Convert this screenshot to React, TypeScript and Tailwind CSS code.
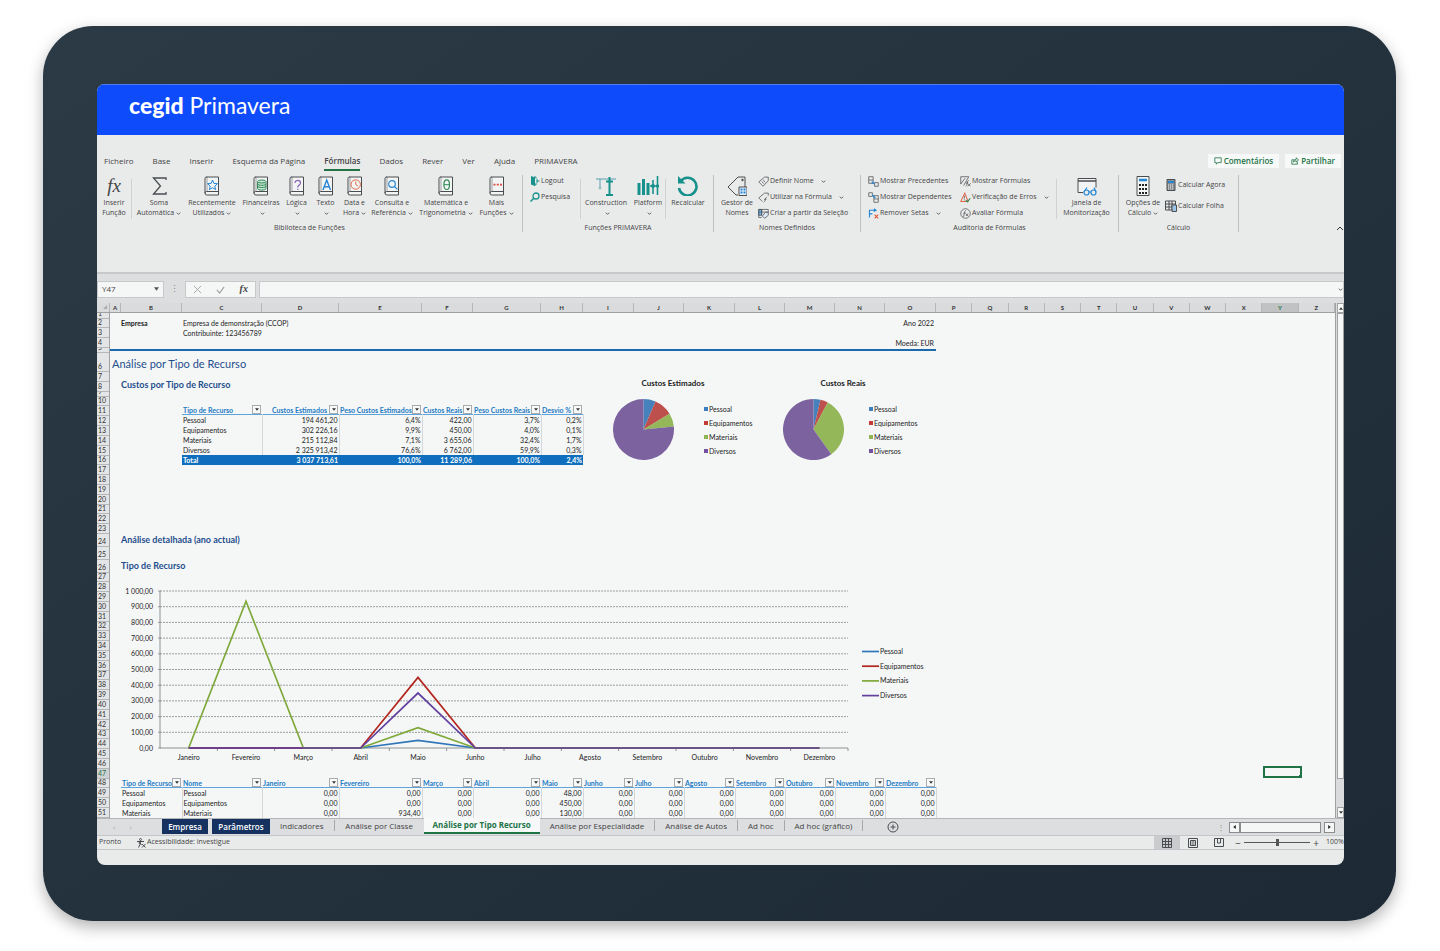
import React from "react";

type IconProps = { children: React.ReactNode; className?: string; box?: string };

const Svg = ({ children, className = "w-5 h-5", box = "0 0 20 20" }: IconProps) => (
  <svg viewBox={box} className={`shrink-0 ${className}`} fill="none" stroke="#4a4d50" strokeWidth="1" aria-hidden="true">
    {children}
  </svg>
);

const Chevron = () => (
  <svg viewBox="0 0 6 6" className="inline-block w-[5px] h-[5px] ml-0.5 shrink-0" fill="none" stroke="#444" aria-hidden="true">
    <path d="M1 2l2 2 2-2" />
  </svg>
);

const Book = ({ children }: { children?: React.ReactNode }) => (
  <Svg>
    <path d="M4 1h12.500v18H5.200A2 2 0 0 1 3 17V2.500A1.500 1.500 0 0 1 4.500 1" fill="#f3f4f4" />
    <path d="M3 17.200a1.500 1.500 0 0 1 1.500-1.700h12" />
    <path d="M5 1v14.500" strokeWidth=".5" />
    {children}
  </Svg>
);

const functionButtons = [
  {
    lines: ["Soma", "Automática"],
    width: "w-[54px]",
    icon: (
      <Svg>
        <path d="M17 4V2H4.500l7 8-7 8H17v-2" strokeWidth="1.300" />
      </Svg>
    ),
  },
  {
    lines: ["Recentemente", "Utilizados"],
    width: "w-[52px]",
    icon: (
      <Book>
        <path d="M10.500 4l1.400 3.400 3.600.3-2.700 2.400.8 3.600-3.100-2-3.100 2 .8-3.600L5.500 7.700l3.600-.3z" stroke="#2487d6" />
      </Book>
    ),
  },
  {
    lines: ["Financeiras", ""],
    width: "w-[46px]",
    icon: (
      <Book>
        <g stroke="#2f8a56" fill="#c7e3d1">
          <path d="M6.500 5.500v7c0 2.200 8.500 2.200 8.500 0v-7" />
          <path d="M6.500 10c0 2 8.500 2 8.500 0M6.500 7.800c0 2 8.500 2 8.500 0" fill="none" />
          <ellipse cx="10.750" cy="5.500" rx="4.250" ry="1.500" />
        </g>
      </Book>
    ),
  },
  {
    lines: ["Lógica", ""],
    width: "w-[25px]",
    icon: (
      <Book>
        <path d="M8 7c0-3.500 5.500-3.500 5.500 0 0 2.200-2.700 2-2.700 4.500M10.800 12.700v1.300" stroke="#8b62b8" strokeWidth="1.200" />
      </Book>
    ),
  },
  {
    lines: ["Texto", ""],
    width: "w-[33px]",
    icon: (
      <Book>
        <path d="M7 14l3.700-10 3.800 10M8.200 10.800h5" stroke="#2487d6" strokeWidth="1.400" />
      </Book>
    ),
  },
  {
    lines: ["Data e", "Hora"],
    width: "w-[25px]",
    icon: (
      <Book>
        <circle cx="10.700" cy="8.500" r="4.700" stroke="#e2694a" />
        <path d="M10.700 5.500v3l2.300 1.500" stroke="#e2694a" />
      </Book>
    ),
  },
  {
    lines: ["Consulta e", "Referência"],
    width: "w-[50px]",
    icon: (
      <Book>
        <circle cx="10" cy="8" r="3.300" stroke="#2487d6" strokeWidth="1.200" />
        <path d="M12.400 10.400l3 3" stroke="#2487d6" strokeWidth="1.300" />
      </Book>
    ),
  },
  {
    lines: ["Matemática e", "Trigonometria"],
    width: "w-[58px]",
    icon: (
      <Book>
        <ellipse cx="10.700" cy="8.700" rx="2.800" ry="4.800" stroke="#2f8a56" strokeWidth="1.200" />
        <path d="M8 8.700h5.500" stroke="#2f8a56" />
      </Book>
    ),
  },
  {
    lines: ["Mais", "Funções"],
    width: "w-[43px]",
    icon: (
      <Book>
        <path d="M6.500 8.700h2M9.800 8.700h2M13 8.700h2" stroke="#dd4b39" strokeWidth="1.800" />
      </Book>
    ),
  },
];

type BigProps = { lines: string[]; icon: React.ReactNode; width: string; chevron?: boolean };

const BigButton = ({ lines, icon, width, chevron = true }: BigProps) => (
  <button className={`flex flex-col items-center self-start pt-px text-[7px] leading-[10px] whitespace-nowrap ${width}`}>
    {icon}
    <span className="mt-0.5">{lines[0]}</span>
    <span className="flex h-[10px] items-center">
      {lines[1]}
      {chevron && <Chevron />}
    </span>
  </button>
);

const SmallButton = ({ label, icon, chevron }: { label: string; icon: React.ReactNode; chevron?: boolean }) => (
  <button className="flex items-center gap-px h-4 shrink-0 text-[7px] leading-[10px] whitespace-nowrap">
    {icon}
    {label}
    {chevron && (
      <span className="ml-1 flex">
        <Chevron />
      </span>
    )}
  </button>
);

const Group = ({ title, width, children }: { title: string; width: string; children: React.ReactNode }) => (
  <section className={`flex flex-col justify-between border-r border-[#bfc1c3] h-[57px] shrink-0 ${width}`}>
    <div className="flex h-[44px]">{children}</div>
    <h3 className="text-[7px] leading-[8px] text-center">{title}</h3>
  </section>
);

const Divider = () => <div className="w-px h-10 mt-1 bg-[#cfd1d2] shrink-0"></div>;

const tag = <path d="M9 1.500h5v5l-7 7.500-6-6z" />;

const Ribbon = () => (
  <div className="flex pt-1 pb-10">
    <Group title="Biblioteca de Funções" width="w-[426px]">
      <BigButton
        lines={["Inserir", "Função"]}
        width="w-[34px]"
        chevron={false}
        icon={<span className="h-5 font-['Liberation_Serif',serif] italic text-[19px] leading-5">fx</span>}
      />
      <Divider />
      {functionButtons.map((b) => (
        <BigButton key={b.lines[0]} {...b} />
      ))}
    </Group>

    <Group title="Funções PRIMAVERA" width="w-[191px]">
      <div className="flex flex-col w-[57px] pl-[7px] -mt-0.5">
        <SmallButton
          label="Logout"
          icon={
            <Svg className="w-[10px] h-[10px]" box="0 0 10 10">
              <path d="M1 0l4 1.500V10L1 8.500z" fill="#17918c" stroke="none" />
              <path d="M4 1h2v1.500M6 7v2H4M7 3v4M9.500 5H7" stroke="#17918c" />
            </Svg>
          }
        />
        <SmallButton
          label="Pesquisa"
          icon={
            <Svg className="w-[10px] h-[10px]" box="0 0 10 10">
              <circle cx="6" cy="4" r="3" stroke="#17918c" strokeWidth="1.300" />
              <path d="M3.800 6.200L.5 9.500" stroke="#17918c" strokeWidth="1.500" />
            </Svg>
          }
        />
      </div>
      <Divider />
      <BigButton
        lines={["Construction", ""]}
        width="w-[50px]"
        icon={
          <Svg>
            <path d="M0 3h20M4 3v8" stroke="#5b9fb0" />
            <path d="M13.500 1v17M10 19h7M10 5.500h7" stroke="#17918c" strokeWidth="2" />
            <circle cx="4" cy="12" r="1" stroke="#5b9fb0" strokeWidth=".7" />
          </Svg>
        }
      />
      <BigButton
        lines={["Platform", ""]}
        width="w-[34px]"
        icon={
          <Svg className="w-6 h-5" box="0 0 24 20">
            <path d="M3 7v12M7.500 3v16M12 7v12" stroke="#17918c" strokeWidth="3" />
            <path d="M17 4v14M21.500 0v19M14 10h8" stroke="#17918c" strokeWidth="1.600" />
            <circle cx="17" cy="10" r="2" fill="#17918c" stroke="none" />
            <circle cx="21.500" cy="10" r="1.700" fill="#17918c" stroke="none" />
          </Svg>
        }
      />
      <Divider />
      <BigButton
        lines={["Recalcular", ""]}
        width="w-[44px]"
        chevron={false}
        icon={
          <Svg className="w-6 h-5" box="0 0 24 20">
            <path d="M4.500 5.500A8.800 8.800 0 1 1 3 12" stroke="#17918c" strokeWidth="2.600" />
            <path d="M2 0v7.500h7.500z" fill="#17918c" stroke="none" />
          </Svg>
        }
      />
    </Group>

    <Group title="Nomes Definidos" width="w-[147px]">
      <BigButton
        lines={["Gestor de", "Nomes"]}
        width="w-[44px] pl-0.5"
        chevron={false}
        icon={
          <Svg>
            <path d="M11 1h7v10M11 1L1 11l8 8h2" />
            <circle cx="15.500" cy="4" r=".8" fill="#4a4d50" />
            <path d="M12 11h8v8.500h-8z" fill="#e8f2fb" stroke="#4a4d50" />
            <path d="M13.500 13.500h2M16.500 13.500h2M13.500 16.500h2M16.500 16.500h2" stroke="#2487d6" strokeWidth="1.800" />
          </Svg>
        }
      />
      <div className="flex flex-col -mt-0.5">
        <SmallButton
          label="Definir Nome"
          chevron
          icon={
            <Svg className="w-[11px] h-[11px]" box="0 0 15 15">
              {tag}
              <path d="M5 7.500l3 3M7 5.500l3 3" />
            </Svg>
          }
        />
        <SmallButton
          label="Utilizar na Fórmula"
          chevron
          icon={
            <Svg className="w-[11px] h-[11px]" box="0 0 15 15">
              <path d="M14 5V1.500H9L1 8l5 5M8 14c2 0 1.500-7 4-7M8.500 10h3" />
            </Svg>
          }
        />
        <SmallButton
          label="Criar a partir da Seleção"
          icon={
            <Svg className="w-[11px] h-[11px]" box="0 0 15 15">
              <path d="M1 2h13v4M1 2v11h4M1 5.500h13M5 2v8" />
              <path d="M1 2h4v8H1z" fill="#2487d6" fillOpacity=".6" />
              <path d="M10 6h4v4l-5 4-3-3z" fill="#dceafa" />
            </Svg>
          }
        />
      </div>
    </Group>

    <Group title="Auditoria de Fórmulas" width="w-[258px]">
      <div className="flex flex-col w-[93px] pl-[7px] -mt-0.5">
        <SmallButton
          label="Mostrar Precedentes"
          icon={
            <Svg className="w-[11px] h-[11px]" box="0 0 15 15">
              <path d="M1 1h6v9H1zM1 5.500h6M9 9h5v5H9z" />
              <path d="M5 8l4 3" stroke="#2487d6" strokeWidth="1.800" />
            </Svg>
          }
        />
        <SmallButton
          label="Mostrar Dependentes"
          icon={
            <Svg className="w-[11px] h-[11px]" box="0 0 15 15">
              <path d="M1 1h5v5H1zM8 5h6v9H8zM8 9.500h6" />
              <path d="M6 4l4 4" stroke="#2487d6" strokeWidth="1.800" />
            </Svg>
          }
        />
        <SmallButton
          label="Remover Setas"
          chevron
          icon={
            <Svg className="w-[11px] h-[11px]" box="0 0 15 15">
              <path d="M2 13V3h8M8 1l3 2-3 2M2 8h4" stroke="#2487d6" strokeWidth="1.500" />
              <path d="M9 9l5 5M14 9l-5 5" stroke="#e2553a" strokeWidth="1.500" />
            </Svg>
          }
        />
      </div>
      <div className="flex flex-col w-[102px] pl-1.5 -mt-0.5">
        <SmallButton
          label="Mostrar Fórmulas"
          icon={
            <Svg className="w-[11px] h-[11px]" box="0 0 15 15">
              <path d="M5 13L12 1H1v10l6-8M8 14c2.500 0 1-8 4-8M8 9.500h3M10.500 10l4 4M14.500 10l-4 4" />
            </Svg>
          }
        />
        <SmallButton
          label="Verificação de Erros"
          chevron
          icon={
            <Svg className="w-[11px] h-[11px]" box="0 0 15 15">
              <path d="M6.500 1.500L1 13h10z" stroke="#e2694a" strokeWidth="1.400" />
              <path d="M6 5v4M6 10v1.500" />
              <path d="M8 11l2 2.500 4-5" stroke="#2f8a56" strokeWidth="1.500" />
            </Svg>
          }
        />
        <SmallButton
          label="Avaliar Fórmula"
          icon={
            <Svg className="w-[11px] h-[11px]" box="0 0 15 15">
              <circle cx="7.500" cy="7.500" r="6.500" />
              <path d="M4 12c2 0 1.500-8.500 4-8.500M4.500 7h3M8 7.500l3 3.500M11 7.500L8 11" />
            </Svg>
          }
        />
      </div>
      <Divider />
      <BigButton
        lines={["Janela de", "Monitorização"]}
        width="w-[59px]"
        chevron={false}
        icon={
          <Svg>
            <path d="M6 16.500H1v-14h18v9" fill="#f3f4f4" />
            <path d="M1 5h18" strokeWidth="1.500" />
            <g stroke="#2487d6" strokeWidth="1.200">
              <circle cx="9.500" cy="16.500" r="2.500" />
              <circle cx="16.500" cy="16.500" r="2.500" />
              <path d="M12 16h2M7 16l3-4.500M19 16l-2-4.500" />
            </g>
          </Svg>
        }
      />
    </Group>

    <Group title="Cálculo" width="w-[120px]">
      <BigButton
        lines={["Opções de", "Cálculo"]}
        width="w-[46px] pl-0.5"
        icon={
          <Svg>
            <path d="M4 .5h12v19H4z" fill="#f3f4f4" />
            <path d="M6 4h8" stroke="#2487d6" strokeWidth="2.500" />
            <path d="M6 9h8M6 13h8M6 17h8" stroke="#222" strokeWidth="1.800" strokeDasharray="2 1" />
          </Svg>
        }
      />
      <div className="flex flex-col gap-[5px] pt-0.5">
        <SmallButton
          label="Calcular Agora"
          icon={
            <Svg className="w-3 h-3" box="0 0 12 12">
              <path d="M2 .5h8v11H2z" fill="#8d9093" />
              <path d="M3 3h6" stroke="#2487d6" strokeWidth="2" />
              <path d="M3 6h6M3 8h6M3 10h6" stroke="#e9ebeb" strokeDasharray="1 1" />
            </Svg>
          }
        />
        <SmallButton
          label="Calcular Folha"
          icon={
            <Svg className="w-3 h-3" box="0 0 12 12">
              <path d="M.5 1h10v9H.5zM4 1v9M7 1v9M.5 4h10M.5 7h10" />
              <path d="M7 5h4.500v6.500H7z" fill="#9cc3ea" />
            </Svg>
          }
        />
      </div>
    </Group>

    <button aria-label="Fechar friso" className="ml-auto self-end">
      <svg viewBox="0 0 8 8" className="w-2 h-2" fill="none" stroke="#333" aria-hidden="true">
        <path d="M1 6l3-3 3 3" />
      </svg>
    </button>
  </div>
);

const menuItems = ["Ficheiro", "Base", "Inserir", "Esquema da Página", "Fórmulas", "Dados", "Rever", "Ver", "Ajuda", "PRIMAVERA"];

const MenuBar = () => (
  <nav className="flex items-center pt-[18px] pl-[7px] pr-[3px] text-[8px] leading-[14px]">
    <div className="flex gap-[19px]">
      {menuItems.map((item) => (
        <a
          key={item}
          href="#"
          className={`border-b-2 py-px whitespace-nowrap ${item === "Fórmulas" ? "border-[#217346] font-semibold" : "border-transparent"}`}
        >
          {item}
        </a>
      ))}
    </div>
    <div className="ml-auto flex gap-1.5 pb-0.5 font-semibold text-[#217346]">
      <button className="flex items-center gap-0.5 bg-[#f7f8f8] px-1.5">
        <Svg className="w-2 h-2" box="0 0 10 10">
          <path d="M1 1h8v6H4.500L3 9V7H1z" stroke="#217346" />
        </Svg>
        Comentários
      </button>
      <button className="flex items-center gap-0.5 bg-[#f7f8f8] px-1.5">
        <Svg className="w-2 h-2" box="0 0 10 10">
          <path d="M4 3.500H1V9h7V6M3 6.500C3 4 4.500 3 6.500 3V1l3 2.700-3 2.700v-1.700C5 4.700 4 5 3 6.500z" stroke="#217346" />
        </Svg>
        Partilhar
      </button>
    </div>
  </nav>
);

const FormulaBar = () => (
  <div className="flex items-center h-[31px] pt-px border-t-2 border-[#c6c8ca] bg-[#dcdee0]">
    <div className="flex items-center w-[67px] h-[17px] bg-[#f5f7f7] border border-[#c6c8ca] pr-1">
      <input aria-label="Caixa de nome" defaultValue="Y47" className="w-full min-w-0 pl-1 text-[8px] outline-none" />
      <svg viewBox="0 0 6 4" className="w-[5px] h-1 shrink-0" fill="#555" aria-hidden="true">
        <path d="M0 0h6L3 4z" />
      </svg>
    </div>
    <span className="w-[21px] text-center text-[9px] text-[#888]">⋮</span>
    <div className="flex items-center justify-around w-[71px] h-[17px] bg-[#f5f7f7] border border-[#c6c8ca]">
      <button aria-label="Cancelar">
        <Svg className="w-[9px] h-[9px]" box="0 0 10 10">
          <path d="M1 1l8 8M9 1L1 9" stroke="#a0a2a4" />
        </Svg>
      </button>
      <button aria-label="Introduzir">
        <Svg className="w-[9px] h-[9px]" box="0 0 10 10">
          <path d="M1 5.500L4 9l5-7" stroke="#a0a2a4" strokeWidth="1.300" />
        </Svg>
      </button>
      <button className="font-['Liberation_Serif',serif] italic font-bold text-[10px] leading-3">fx</button>
    </div>
    <div className="flex flex-1 items-center h-[17px] ml-[3px] bg-[#f5f7f7] border border-[#c6c8ca]">
      <input aria-label="Barra de fórmulas" className="flex-1 min-w-0 text-[8px] outline-none" />
      <Chevron />
    </div>
  </div>
);

const fixedColumns = [
  { name: "A", width: "w-[11px]" },
  { name: "B", width: "w-[61px]" },
  { name: "C", width: "w-[80px]" },
  { name: "D", width: "w-[77px]" },
  { name: "E", width: "w-[83px]" },
  { name: "F", width: "w-[51px]" },
  { name: "G", width: "w-[68px]" },
  { name: "H", width: "w-[42px]" },
  { name: "I", width: "w-[51px]" },
  { name: "J", width: "w-[50px]" },
  { name: "K", width: "w-[51px]" },
  { name: "L", width: "w-[50px]" },
  { name: "M", width: "w-[50px]" },
  { name: "N", width: "w-[50px]" },
  { name: "O", width: "w-[51px]" },
];

const ColumnHeader = () => (
  <div className="flex h-[10px] border-b border-[#9fa1a3] bg-[#d9dbdd] text-[6px] leading-[10px] font-bold text-center text-[#333]">
    <div className="flex justify-end w-[13px] border-r border-[#b4b6b8] p-0.5">
      <svg viewBox="0 0 4 4" className="w-1 h-1" fill="#aaa" aria-hidden="true">
        <path d="M4 0v4H0z" />
      </svg>
    </div>
    {fixedColumns.map((c) => (
      <div key={c.name} className={`border-r border-[#b4b6b8] ${c.width}`}>
        {c.name}
      </div>
    ))}
    {["P", "Q", "R", "S", "T", "U", "V", "W", "X", "Y", "Z"].map((c) => (
      <div key={c} className={`flex-1 border-r border-[#b4b6b8] ${c === "Y" ? "bg-[#c0c2c4] text-[#217346]" : ""}`}>
        {c}
      </div>
    ))}
  </div>
);

// relative heights of the rows that are not the default size
const rowHeights: Record<number, number> = { 1: 5, 5: 5, 6: 20, 9: 4, 24: 13.5, 25: 13, 26: 13 };

const RowHeader = () => (
  <div className="flex flex-col w-[13px] shrink-0 bg-[#e3e5e6] border-r border-[#9fa1a3] text-[7px] leading-[9px] text-[#333]">
    {Array.from({ length: 51 }, (_, i) => i + 1).map((n) => (
      <div
        key={n}
        className={`flex items-end basis-0 min-h-0 overflow-hidden pl-px border-b border-[#b4b6b8] ${n === 47 ? "bg-[#cfd1d3] text-[#217346]" : ""}`}
        style={{ flexGrow: rowHeights[n] ?? 9.8 }}
      >
        {n}
      </div>
    ))}
  </div>
);

const FilterButton = ({ name }: { name: string }) => (
  <button aria-label={`Filtrar ${name}`} className="flex items-center justify-center w-[9px] h-[9px] shrink-0 border border-[#a9abad] bg-[#f8f9f9]">
    <svg viewBox="0 0 6 4" className="w-1 h-[3px]" fill="#333" aria-hidden="true">
      <path d="M0 0h6L3 4z" />
    </svg>
  </button>
);

const HeadCell = ({ name, end }: { name: string; end?: boolean }) => (
  <th className="p-0 font-bold text-[#1c7ac4]">
    <div className={`flex items-center h-[9px] pl-px pr-px ${end ? "justify-end gap-0.5" : "justify-between"}`}>
      <span className="whitespace-nowrap">{name}</span>
      <FilterButton name={name} />
    </div>
  </th>
);

const costRows = [
  ["Pessoal", "194 461,20", "6,4%", "422,00", "3,7%", "0,2%"],
  ["Equipamentos", "302 226,16", "9,9%", "450,00", "4,0%", "0,1%"],
  ["Materiais", "215 112,84", "7,1%", "3 655,06", "32,4%", "1,7%"],
  ["Diversos", "2 325 913,42", "76,6%", "6 762,00", "59,9%", "0,3%"],
];
const totalRow = ["Total", "3 037 713,61", "100,0%", "11 289,06", "100,0%", "2,4%"];

const CostTable = () => (
  <table className="table-fixed w-[401px] ml-[72px] mt-3 text-[7px] leading-[10px]">
    <colgroup>
      <col className="w-[80px]" />
      <col className="w-[77px]" />
      <col className="w-[83px]" />
      <col className="w-[51px]" />
      <col className="w-[68px]" />
      <col className="w-[42px]" />
    </colgroup>
    <thead>
      <tr className="border-b border-[#5fa3dc]">
        {["Tipo de Recurso", "Custos Estimados", "Peso Custos Estimados", "Custos Reais", "Peso Custos Reais", "Desvio %"].map((h) => (
          <HeadCell key={h} name={h} end={h === "Custos Estimados"} />
        ))}
      </tr>
    </thead>
    <tbody>
      {costRows.map((row) => (
        <tr key={row[0]}>
          {row.map((cell, i) => (
            <td key={i} className={`px-px py-0 border-r border-[#d5d8da] ${i > 0 ? "text-right" : ""}`}>
              {cell}
            </td>
          ))}
        </tr>
      ))}
      <tr className="bg-[#0f6fbe] text-white font-bold">
        {totalRow.map((cell, i) => (
          <td key={i} className={`px-px py-0 ${i > 0 ? "text-right" : ""}`}>
            {cell}
          </td>
        ))}
      </tr>
    </tbody>
  </table>
);

const series = [
  { name: "Pessoal", dot: "bg-[#3b7fc0]", fill: "#4681bb", line: "#2f75b8", values: [0, 0, 0, 0, 48, 0, 0, 0, 0, 0, 0, 0] },
  { name: "Equipamentos", dot: "bg-[#c23b36]", fill: "#bd4f4c", line: "#b3261f", values: [0, 0, 0, 0, 450, 0, 0, 0, 0, 0, 0, 0] },
  { name: "Materiais", dot: "bg-[#8fb552]", fill: "#94b759", line: "#7fa93a", values: [0, 934.4, 0, 0, 130, 0, 0, 0, 0, 0, 0, 0] },
  { name: "Diversos", dot: "bg-[#7350a0]", fill: "#7c639f", line: "#6340a0", values: [0, 0, 0, 0, 350, 0, 0, 0, 0, 0, 0, 0] },
];

const slicePath = (from: number, to: number) => {
  const x = (t: number) => 50 + 50 * Math.sin(2 * Math.PI * t);
  const y = (t: number) => 50 - 50 * Math.cos(2 * Math.PI * t);
  return `M50 50L${x(from)} ${y(from)}A50 50 0 ${to - from > 0.5 ? 1 : 0} 1 ${x(to)} ${y(to)}z`;
};

const Pie = ({ title, shares, gap }: { title: string; shares: number[]; gap: string }) => {
  const total = shares.reduce((a, b) => a + b, 0);
  let at = 0;
  return (
    <figure className="w-[170px] shrink-0">
      <figcaption className="w-[120px] text-center text-[8px] leading-3 font-bold text-[#222]">{title}</figcaption>
      <div className={`flex items-center mt-[10px] ${gap}`}>
        <svg viewBox="0 0 100 100" className="w-[61px] h-[61px]" aria-hidden="true">
          {shares.map((s, i) => {
            const from = at / total;
            at += s;
            return <path key={i} d={slicePath(from, at / total)} fill={series[i].fill} />;
          })}
        </svg>
        <ul className="text-[7px] leading-[14px]">
          {series.map((s) => (
            <li key={s.name} className="flex items-center gap-px">
              <span className={`w-1 h-1 ${s.dot}`}></span>
              {s.name}
            </li>
          ))}
        </ul>
      </div>
    </figure>
  );
};

const months = ["Janeiro", "Fevereiro", "Março", "Abril", "Maio", "Junho", "Julho", "Agosto", "Setembro", "Outubro", "Novembro", "Dezembro"];

const LineChart = () => {
  const px = (i: number) => 50 + (i + 0.5) * (688 / 12);
  const py = (v: number) => 174 - v * 0.157;
  return (
    <svg viewBox="0 0 826 192" className="w-[826px] h-[192px]" fontSize="7" fill="#222" aria-hidden="true">
      {Array.from({ length: 11 }, (_, i) => i * 100).map((v) => (
        <g key={v}>
          {v > 0 && <path d={`M50 ${py(v)}H738`} stroke="#9a9d9f" strokeDasharray="2 1" />}
          <path d={`M48 ${py(v)}h3`} stroke="#9a9d9f" />
          <text x="43" y={py(v) + 2.5} textAnchor="end">
            {v === 1000 ? "1 000,00" : `${v},00`}
          </text>
        </g>
      ))}
      <path d="M50 17v157H738" fill="none" stroke="#8e9193" />
      {months.map((m, i) => (
        <g key={m}>
          <path d={`M${px(i + 0.5)} 174v3`} stroke="#8e9193" />
          <text x={px(i)} y="186" textAnchor="middle">
            {m}
          </text>
        </g>
      ))}
      {series.map((s, n) => (
        <g key={s.name}>
          <polyline points={s.values.map((v, i) => `${px(i)},${py(v)}`).join(" ")} fill="none" stroke={s.line} strokeWidth="1.700" />
          <path d={`M752 ${77.500 + n * 14.7}h17`} stroke={s.line} strokeWidth="1.700" />
          <text x="770" y={80 + n * 14.7}>
            {s.name}
          </text>
        </g>
      ))}
    </svg>
  );
};

const detailRows = [
  { name: "Pessoal", values: ["0,00", "0,00", "0,00", "0,00", "48,00"] },
  { name: "Equipamentos", values: ["0,00", "0,00", "0,00", "0,00", "450,00"] },
  { name: "Materiais", values: ["0,00", "934,40", "0,00", "0,00", "130,00"] },
];

const DetailTable = () => (
  <table className="table-fixed w-[815px] ml-[11px] text-[7px] leading-[10px]">
    <colgroup>
      {fixedColumns.slice(1).map((c) => (
        <col key={c.name} className={c.width} />
      ))}
    </colgroup>
    <thead>
      <tr className="border-b border-[#5fa3dc]">
        {["Tipo de Recurso", "Nome", ...months].map((h) => (
          <HeadCell key={h} name={h} />
        ))}
      </tr>
    </thead>
    <tbody>
      {detailRows.map((row) => (
        <tr key={row.name}>
          {[row.name, row.name, ...row.values, ...Array(7).fill("0,00")].map((cell, i) => (
            <td key={i} className={`px-px py-0 border-r border-[#d5d8da] ${i > 1 ? "text-right" : ""}`}>
              {cell}
            </td>
          ))}
        </tr>
      ))}
    </tbody>
  </table>
);

const Sheet = () => (
  <div className="flex font-['Lato','Liberation_Sans',sans-serif] bg-[#d9dbdd]">
    <div className="flex-1 min-w-0">
      <ColumnHeader />
      <div className="flex">
        <RowHeader />
        <main className="flex-1 min-w-0 overflow-hidden bg-[#f5f7f7] text-[#222]">
          <div className="flex justify-between w-[826px] pt-[5px] pb-px pl-[11px] pr-0.5 border-b-2 border-[#1d69ae] text-[7px] leading-[10px]">
            <div className="flex">
              <b className="w-[62px]">Empresa</b>
              <div>
                <p>Empresa de demonstração (CCOP)</p>
                <p>Contribuinte: 123456789</p>
              </div>
            </div>
            <div className="flex flex-col gap-[10px] text-right">
              <p>Ano 2022</p>
              <p>Moeda: EUR</p>
            </div>
          </div>
          <h1 className="pl-0.5 text-[11px] leading-[26px] text-[#1f4e8c]">Análise por Tipo de Recurso</h1>
          <div className="flex">
            <div className="w-[503px] shrink-0">
              <h2 className="pl-[11px] text-[9px] leading-4 font-bold text-[#1f4e8c]">Custos por Tipo de Recurso</h2>
              <CostTable />
            </div>
            <Pie title="Custos Estimados" shares={[6.4, 9.9, 7.1, 76.6]} gap="gap-[30px]" />
            <Pie title="Custos Reais" shares={[3.7, 4, 32.4, 59.9]} gap="gap-[25px]" />
          </div>
          <h2 className="mt-[67px] pl-[11px] text-[9px] leading-4 font-bold text-[#1f4e8c]">Análise detalhada (ano actual)</h2>
          <h2 className="mt-2.5 pl-[11px] text-[9px] leading-4 font-bold text-[#1f4e8c]">Tipo de Recurso</h2>
          <LineChart />
          <div className="flex justify-end h-3 pr-[33px]">
            <div className="flex items-end justify-end w-[39px] border-2 border-[#217346]">
              <span className="w-[3px] h-[3px] -mr-0.5 -mb-0.5 bg-[#217346]"></span>
            </div>
          </div>
          <DetailTable />
        </main>
      </div>
    </div>
    <div className="flex flex-col w-[9px] shrink-0 border-l border-[#9fa1a3] pl-px">
      <button aria-label="Subir" className="flex h-[10px] items-center justify-center border border-[#a0a2a4] bg-[#f5f7f7]">
        <svg viewBox="0 0 6 4" className="w-1 h-[3px]" fill="#333" aria-hidden="true">
          <path d="M0 4h6L3 0z" />
        </svg>
      </button>
      <div className="grow-[465] border border-[#a0a2a4] bg-[#f5f7f7]"></div>
      <div className="grow-[28]"></div>
      <button aria-label="Descer" className="flex h-[11px] items-center justify-center border border-[#a0a2a4] bg-[#f5f7f7]">
        <svg viewBox="0 0 6 4" className="w-1 h-[3px]" fill="#333" aria-hidden="true">
          <path d="M0 0h6L3 4z" />
        </svg>
      </button>
    </div>
  </div>
);

const plainTab = "px-2.5 mt-px mb-1 border-r border-[#a5a7a9] leading-3 whitespace-nowrap";

const SheetTabs = () => (
  <div className="flex h-[17px] border-t border-[#b4b6b8] bg-[#dcdee0] text-[8px] leading-3 text-[#444]">
    <div className="flex items-center gap-3.5 w-[65px] pl-4 text-[#aaa]">
      <button aria-label="Folha anterior">‹</button>
      <button aria-label="Folha seguinte">›</button>
    </div>
    <button className="w-[46px] mb-px mr-1 bg-[#14315f] text-white font-semibold">Empresa</button>
    <button className="w-[58px] mb-px bg-[#14315f] text-white font-semibold">Parâmetros</button>
    <button className={plainTab}>Indicadores</button>
    <button className="w-[89px] mt-px mb-1 whitespace-nowrap">Análise por Classe</button>
    <button className="w-[116px] -mt-px mb-px bg-[#f7f9f9] border-b-2 border-[#217346] text-[#217346] font-bold whitespace-nowrap">
      Análise por Tipo Recurso
    </button>
    <button className={plainTab}>Análise por Especialidade</button>
    <button className={plainTab}>Análise de Autos</button>
    <button className={plainTab}>Ad hoc</button>
    <button className={plainTab}>Ad hoc (gráfico)</button>
    <button aria-label="Nova folha" className="ml-6">
      <Svg className="w-3 h-3" box="0 0 12 12">
        <circle cx="6" cy="6" r="5" />
        <path d="M6 3.500v5M3.500 6h5" />
      </Svg>
    </button>
    <div className="ml-auto mr-[9px] flex items-center">
      <span className="w-3 text-[#888]">⋮</span>
      <button aria-label="Esquerda" className="flex items-center justify-center w-[11px] h-[11px] border border-[#8a8c8e] bg-[#f5f7f7]">
        <svg viewBox="0 0 4 6" className="w-[3px] h-1" fill="#222" aria-hidden="true">
          <path d="M4 0v6L0 3z" />
        </svg>
      </button>
      <div className="w-[81px] h-[11px] mr-[3px] border border-[#8a8c8e] bg-[#f5f7f7]"></div>
      <button aria-label="Direita" className="flex items-center justify-center w-[11px] h-[11px] border border-[#8a8c8e] bg-[#f5f7f7]">
        <svg viewBox="0 0 4 6" className="w-[3px] h-1" fill="#222" aria-hidden="true">
          <path d="M0 0v6l4-3z" />
        </svg>
      </button>
    </div>
  </div>
);

const StatusBar = () => (
  <footer className="flex items-center h-[15px] pl-0.5 border-y border-[#c3c7cc] text-[7px] text-[#444]">
    <span className="w-[37px]">Pronto</span>
    <Svg className="w-[10px] h-[10px]" box="0 0 10 10">
      <circle cx="4.500" cy="1.500" r="1" />
      <path d="M1 3.500h7M4.500 3.500v2L2.500 9.500M4.500 5.500L5.500 7M6 6l3.500 3.500M9.500 6L6 9.500M3.300 3.500v2.500" />
    </Svg>
    <span className="ml-px">Acessibilidade: investigue</span>
    <div className="ml-auto flex h-full items-center">
      <button aria-label="Normal" className="flex items-center justify-center w-[26px] h-full bg-[#c9cbcd]">
        <Svg className="w-[10px] h-[10px]" box="0 0 10 10">
          <path d="M.5.500h9v9h-9zM3.500.500v9M6.500.500v9M.5 3.500h9M.5 6.500h9" />
        </Svg>
      </button>
      <button aria-label="Esquema de página" className="flex justify-center w-[26px]">
        <Svg className="w-[10px] h-[10px]" box="0 0 10 10">
          <path d="M.5.500h9v9h-9zM2.500 2.500h5v5h-5zM3.500 4h3M3.500 6h3" />
        </Svg>
      </button>
      <button aria-label="Quebras de página" className="flex justify-center w-[26px]">
        <Svg className="w-[10px] h-[10px]" box="0 0 10 10">
          <path d="M.5.500h9v8h-9zM3.500.500v4.500h3V.5" />
        </Svg>
      </button>
      <button aria-label="Reduzir" className="w-3 text-center text-[10px] leading-3">−</button>
      <input
        type="range"
        aria-label="Zoom"
        defaultValue="50"
        className="w-[66px] h-2 appearance-none bg-transparent [&::-webkit-slider-runnable-track]:h-px [&::-webkit-slider-runnable-track]:bg-[#555] [&::-webkit-slider-thumb]:appearance-none [&::-webkit-slider-thumb]:w-[3px] [&::-webkit-slider-thumb]:h-[7px] [&::-webkit-slider-thumb]:-mt-[3px] [&::-webkit-slider-thumb]:bg-[#555]"
      />
      <button aria-label="Ampliar" className="w-3 text-center text-[10px] leading-3">+</button>
      <span className="w-[18px] ml-1 whitespace-nowrap">100%</span>
    </div>
  </footer>
);

export default function App() {
  return (
    <div className="min-h-screen bg-white pt-[26px] pb-[30px] pl-[43px] pr-[44px]">
      <div className="rounded-[50px] bg-linear-to-br from-[#2b3a45] to-[#1d2a35] pt-[58px] pb-14 pl-[54px] pr-[52px] shadow-[0_6px_16px_rgba(0,0,0,0.3)]">
        <div className="rounded-lg overflow-hidden bg-[#e9ebeb] font-['Open_Sans','Liberation_Sans',sans-serif] text-[#444]">
          <header className="h-[51px] pt-[7px] pl-8 bg-[#0d4bfb] border-t border-[#4f7df0] text-white text-[23px] leading-[26px] font-['Lato','Liberation_Sans',sans-serif]">
            <b className="font-black">cegid</b> Primavera
          </header>
          <MenuBar />
          <Ribbon />
          <FormulaBar />
          <Sheet />
          <SheetTabs />
          <StatusBar />
          <div className="h-[15px]"></div>
        </div>
      </div>
    </div>
  );
}
